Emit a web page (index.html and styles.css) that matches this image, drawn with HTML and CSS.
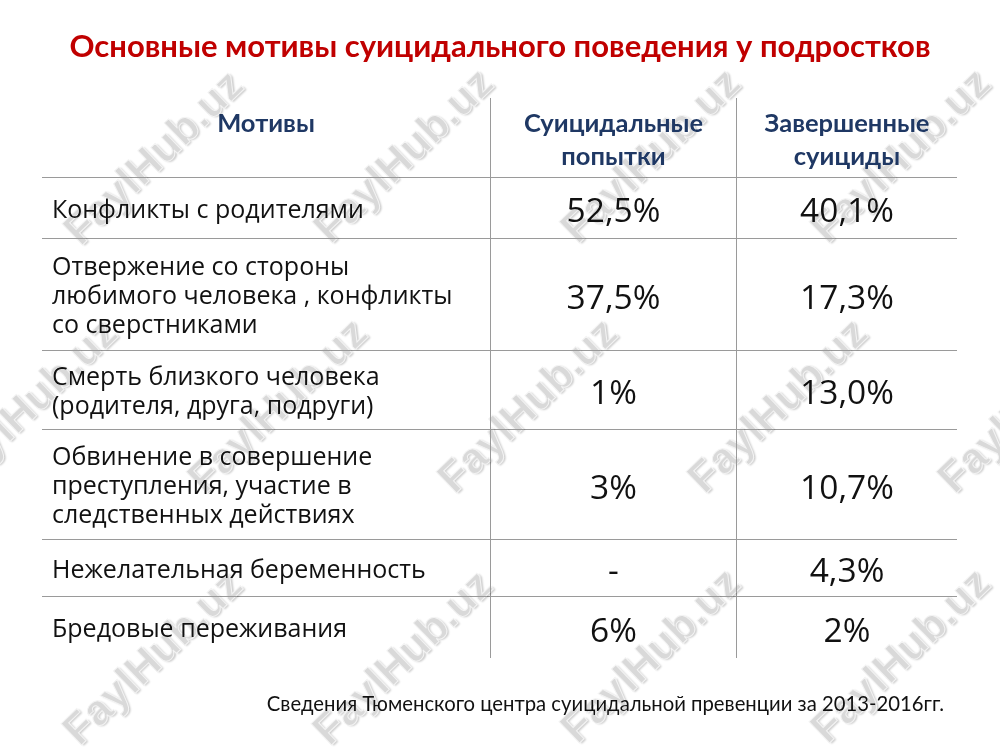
FILE: index.html
```html
<!DOCTYPE html>
<html lang="ru">
<head>
<meta charset="utf-8">
<title>Мотивы суицидального поведения</title>
<link rel="stylesheet" href="styles.css">
</head>
<body>
<div class="slide">
  <h1 class="title">Основные мотивы суицидального поведения у подростков</h1>
  <div class="table">
    <div class="cell head">Мотивы</div>
    <div class="cell head sep">Суицидальные<br>попытки</div>
    <div class="cell head sep">Завершенные<br>суициды</div>

    <div class="cell motive">Конфликты с родителями</div>
    <div class="cell num sep">52,5%</div>
    <div class="cell num sep">40,1%</div>

    <div class="cell motive">Отвержение со стороны<br>любимого человека , конфликты<br>со сверстниками</div>
    <div class="cell num sep">37,5%</div>
    <div class="cell num sep">17,3%</div>

    <div class="cell motive">Смерть близкого человека<br>(родителя, друга, подруги)</div>
    <div class="cell num sep">1%</div>
    <div class="cell num sep">13,0%</div>

    <div class="cell motive">Обвинение в совершение<br>преступления, участие в<br>следственных действиях</div>
    <div class="cell num sep">3%</div>
    <div class="cell num sep">10,7%</div>

    <div class="cell motive">Нежелательная беременность</div>
    <div class="cell num sep">-</div>
    <div class="cell num sep">4,3%</div>

    <div class="cell motive last">Бредовые переживания</div>
    <div class="cell num sep last">6%</div>
    <div class="cell num sep last">2%</div>
  </div>
  <p class="source">Сведения Тюменского центра суицидальной превенции за 2013-2016гг.</p>

  <div class="marks" aria-hidden="true">
    <span class="mark m1">FaylHub.uz</span>
    <span class="mark m2">FaylHub.uz</span>
    <span class="mark m3">FaylHub.uz</span>
    <span class="mark m4">FaylHub.uz</span>
    <span class="mark m5">FaylHub.uz</span>
    <span class="mark m6">FaylHub.uz</span>
    <span class="mark m7">FaylHub.uz</span>
    <span class="mark m8">FaylHub.uz</span>
    <span class="mark m9">FaylHub.uz</span>
    <span class="mark m10">FaylHub.uz</span>
    <span class="mark m11">FaylHub.uz</span>
    <span class="mark m12">FaylHub.uz</span>
    <span class="mark m13">FaylHub.uz</span>
  </div>
</div>
</body>
</html>
```

FILE: styles.css
```css
* { box-sizing: border-box; }
html, body { margin: 0; padding: 0; background: #fff; }
.slide {
  position: relative;
  width: 1000px;
  height: 750px;
  overflow: hidden;
  background: #fff;
}
.title {
  margin: 0;
  padding-top: 24px;
  height: 98px;
  text-align: center;
  font-family: Lato, "Liberation Sans", sans-serif;
  font-weight: 700;
  font-size: 31px;
  line-height: 42px;
  color: #c00000;
}
.table {
  display: grid;
  margin-left: 42px;
  grid-template-columns: 448px 246px 221px;
  grid-template-rows: 80px 61px 112px 79px 110px 57px 61px;
}
.cell {
  border-bottom: 1px solid #9a9a9a;
  display: flex;
  align-items: center;
}
.cell.last { border-bottom: none; }
.sep { border-left: 1px solid #9a9a9a; justify-content: center; text-align: center; }
.head {
  align-items: flex-start;
  justify-content: center;
  text-align: center;
  padding-top: 8px;
  font-family: Lato, "Liberation Sans", sans-serif;
  font-weight: 700;
  font-size: 25.5px;
  line-height: 33px;
  color: #1f3864;
}
.motive {
  padding-left: 10px;
  font-family: "Open Sans", "Noto Sans", sans-serif;
  font-size: 25px;
  line-height: 29px;
  color: #111;
}
.num {
  font-family: "Open Sans", "Noto Sans", sans-serif;
  font-size: 33.5px;
  line-height: 40px;
  color: #111;
  padding-top: 2px;
}
.source {
  margin: 0;
  padding-top: 32px;
  padding-right: 56px;
  text-align: right;
  font-family: Lato, "Liberation Sans", sans-serif;
  font-size: 20.3px;
  line-height: 26px;
  color: #111;
}
.marks {
  position: absolute;
  inset: 0;
  pointer-events: none;
  mix-blend-mode: darken;
}
.mark {
  position: absolute;
  transform: translate(-50%, -50%) rotate(-44deg);
  font-family: "Liberation Sans", Arial, sans-serif;
  font-weight: 700;
  font-size: 43px;
  line-height: 1;
  white-space: nowrap;
  color: #d9d9d9;
  -webkit-text-stroke: 1px #f4f4f4;
  text-shadow: 1px 2px 2px rgba(0, 0, 0, 0.2);
}
.m1 { left: 153px; top: 157px; }
.m2 { left: 403px; top: 155px; }
.m3 { left: 650px; top: 155px; }
.m4 { left: 900px; top: 155px; }
.m5 { left: 27px; top: 405px; }
.m6 { left: 277px; top: 405px; }
.m7 { left: 527px; top: 405px; }
.m8 { left: 777px; top: 405px; }
.m9 { left: 1027px; top: 405px; }
.m10 { left: 152px; top: 657px; }
.m11 { left: 402px; top: 657px; }
.m12 { left: 650px; top: 655px; }
.m13 { left: 900px; top: 655px; }
```
